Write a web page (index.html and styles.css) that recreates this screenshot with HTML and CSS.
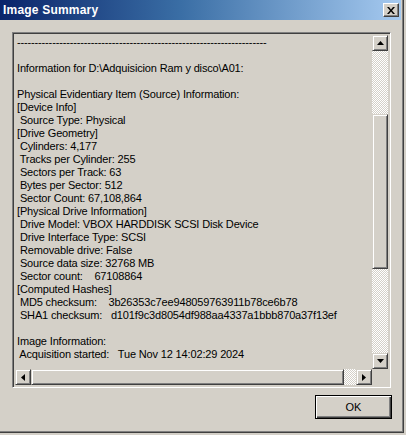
FILE: index.html
```html
<!DOCTYPE html>
<html>
<head>
<meta charset="utf-8">
<link rel="stylesheet" href="styles.css">
</head>
<body>
<div class="window">
  <div class="titlebar">
    <span class="title">Image Summary</span>
    <button class="close" aria-label="Close">
      <svg width="8" height="7" viewBox="0 0 8 7"><path d="M0 0h2l2 2.5L6 0h2L5 3.5 8 7H6L4 4.5 2 7H0l3-3.5z" fill="#000"/></svg>
    </button>
  </div>
  <div class="body">
    <div class="textbox">
      <div class="text">-----------------------------------------------------------------------

Information for D:\Adquisicion Ram y disco\A01:

Physical Evidentiary Item (Source) Information:
[Device Info]
 Source Type: Physical
[Drive Geometry]
 Cylinders: 4,177
 Tracks per Cylinder: 255
 Sectors per Track: 63
 Bytes per Sector: 512
 Sector Count: 67,108,864
[Physical Drive Information]
 Drive Model: VBOX HARDDISK SCSI Disk Device
 Drive Interface Type: SCSI
 Removable drive: False
 Source data size: 32768 MB
 Sector count:    67108864
[Computed Hashes]
 MD5 checksum:    3b26353c7ee948059763911b78ce6b78
 SHA1 checksum:   d101f9c3d8054df988aa4337a1bbb870a37f13ef

Image Information:
 Acquisition started:   Tue Nov 12 14:02:29 2024</div>
      <div class="vscroll">
        <div class="sbtn"><svg width="7" height="4" viewBox="0 0 7 4"><path d="M3.5 0L7 4H0z" fill="#000"/></svg></div>
        <div class="track vtrack">
          <div class="thumb vthumb"></div>
        </div>
        <div class="sbtn"><svg width="7" height="4" viewBox="0 0 7 4"><path d="M0 0h7L3.5 4z" fill="#000"/></svg></div>
      </div>
      <div class="hscroll">
        <div class="sbtn"><svg width="4" height="7" viewBox="0 0 4 7"><path d="M4 0v7L0 3.5z" fill="#000"/></svg></div>
        <div class="track htrack">
          <div class="thumb hthumb"></div>
        </div>
        <div class="sbtn"><svg width="4" height="7" viewBox="0 0 4 7"><path d="M0 0l4 3.5L0 7z" fill="#000"/></svg></div>
      </div>
      <div class="corner"></div>
    </div>
    <div class="actions">
      <button class="ok">OK</button>
    </div>
  </div>
</div>
</body>
</html>
```
FILE: styles.css
```css
html, body {
  margin: 0;
  padding: 0;
}
body {
  width: 406px;
  height: 435px;
  background: #d4d0c8;
  font-family: "Liberation Sans", Arial, sans-serif;
  overflow: hidden;
}
.window {
  width: 404px;
  height: 433px;
  box-sizing: border-box;
  border-right: 1px solid #404040;
  border-bottom: 1px solid #404040;
  box-shadow: inset -1px -1px #808080;
  display: flex;
  flex-direction: column;
}
.titlebar {
  height: 20px;
  margin-right: 2px;
  background: linear-gradient(to right, #0a246a 0%, #3a6ea5 45%, #a6caf0 100%);
  display: flex;
  align-items: center;
  justify-content: space-between;
  padding: 0 2px 0 3px;
}
.title {
  color: #fff;
  font-weight: bold;
  font-size: 12px;
  letter-spacing: 0.2px;
}
.close {
  width: 16px;
  height: 14px;
  padding: 0;
  margin: 0;
  box-sizing: border-box;
  background: #d4d0c8;
  border: 1px solid;
  border-color: #fff #404040 #404040 #fff;
  box-shadow: inset -1px -1px #808080;
  display: flex;
  align-items: center;
  justify-content: center;
}
.body {
  flex: 1;
  padding: 12px 0 0 12px;
  display: flex;
  flex-direction: column;
}
.textbox {
  width: 379px;
  height: 356px;
  box-sizing: border-box;
  border: 1px solid;
  border-color: #808080 #fff #fff #808080;
  box-shadow: inset 1px 1px #404040, inset -1px -1px #d4d0c8;
  padding: 2px;
  display: grid;
  grid-template-columns: 1fr 16px;
  grid-template-rows: 1fr 16px;
  background: #d4d0c8;
}
.text {
  white-space: pre;
  overflow: hidden;
  font-size: 11px;
  line-height: 13px;
  letter-spacing: -0.15px;
  color: #000;
  padding: 1px 0 0 2px;
}
.vscroll {
  display: flex;
  flex-direction: column;
}
.hscroll {
  display: flex;
}
.sbtn {
  width: 16px;
  height: 16px;
  flex: none;
  box-sizing: border-box;
  background: #d4d0c8;
  border: 1px solid;
  border-color: #d4d0c8 #404040 #404040 #d4d0c8;
  box-shadow: inset 1px 1px #fff, inset -1px -1px #808080;
  display: flex;
  align-items: center;
  justify-content: center;
}
.track {
  flex: 1;
  background: repeating-conic-gradient(#fff 0 25%, #d4d0c8 0 50%) 0 0 / 2px 2px;
  display: flex;
}
.vtrack {
  flex-direction: column;
  padding-top: 63px;
}
.vthumb {
  height: 155px;
}
.hthumb {
  width: 313px;
}
.thumb {
  box-sizing: border-box;
  background: #d4d0c8;
  border: 1px solid;
  border-color: #d4d0c8 #404040 #404040 #d4d0c8;
  box-shadow: inset 1px 1px #fff, inset -1px -1px #808080;
}
.corner {
  background: #d4d0c8;
}
.actions {
  display: flex;
  justify-content: flex-end;
  padding: 7px 0 0 0;
  width: 380px;
}
.ok {
  width: 77px;
  height: 24px;
  box-sizing: border-box;
  font-family: "Liberation Sans", Arial, sans-serif;
  font-size: 11px;
  color: #000;
  background: #d4d0c8;
  border: 1px solid #000;
  box-shadow: inset 1px 1px #fff, inset -1px -1px #404040, inset -2px -2px #808080;
  padding: 0;
}
```
